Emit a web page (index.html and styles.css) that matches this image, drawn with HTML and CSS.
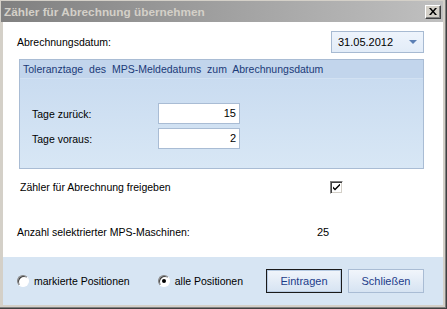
FILE: index.html
```html
<!DOCTYPE html>
<html lang="de">

<head>
    <meta charset="UTF-8">
    <title>Zähler für Abrechnung übernehmen</title>
    <link rel="stylesheet" href="styles.css">
</head>

<body>

    <div class="window">
        <div class="titlebar">
            <span class="title">Zähler für Abrechnung übernehmen</span>
            <span class="close-btn">
                <svg width="8" height="7" viewBox="0 0 8 7">
                    <path d="M0 0h2l2 2.5L6 0h2L5 3.5 8 7H6L4 4.5 2 7H0l3-3.5z" fill="#000"/>
                </svg>
            </span>
        </div>

        <div class="client">
            <div class="content">
                <div class="date-row">
                    <span class="label">Abrechnungsdatum:</span>
                    <div class="combo">
                        <span>31.05.2012</span>
                        <span class="combo-arrow"></span>
                    </div>
                </div>

                <div class="group">
                    <div class="group-head">Toleranztage des MPS-Meldedatums zum Abrechnungsdatum</div>
                    <div class="group-body">
                        <div class="field">
                            <span class="field-label">Tage zurück:</span>
                            <div class="num-input">15</div>
                        </div>
                        <div class="field">
                            <span class="field-label">Tage voraus:</span>
                            <div class="num-input">2</div>
                        </div>
                    </div>
                </div>

                <div class="check-row">
                    <span class="check-label">Zähler für Abrechnung freigeben</span>
                    <span class="checkbox">
                        <svg width="7" height="7" viewBox="0 0 7 7">
                            <path d="M0 2.5v2l2 2 5-5v-2l-5 5z" fill="#000"/>
                        </svg>
                    </span>
                </div>

                <div class="count-row">
                    <span class="count-label">Anzahl selektrierter MPS-Maschinen:</span>
                    <span class="count-value">25</span>
                </div>
            </div>

            <div class="footer">
                <div class="radio-group">
                    <label class="radio-item"><span class="radio"></span>markierte Positionen</label>
                    <label class="radio-item second"><span class="radio checked"></span>alle Positionen</label>
                </div>
                <div class="button-group">
                    <span class="btn default">Eintragen</span>
                    <span class="btn">Schließen</span>
                </div>
            </div>
        </div>
    </div>

</body>

</html>
```

FILE: styles.css
```css
/* Page */
body {
    margin: 0;
    font-family: 'Liberation Sans', Arial, sans-serif;
    font-size: 10.5px;
    color: #000;
    background: #d4d0c8;
}

/* Classic window frame */
.window {
    width: 447px;
    height: 309px;
    box-sizing: border-box;
    padding: 1px 0 0 1px;
    background: #d4d0c8;
    border-right: 1px solid #404040;
    border-bottom: 1px solid #404040;
    box-shadow: inset -1px -1px 0 #808080;
    display: flex;
    flex-direction: column;
}

.titlebar {
    height: 21px;
    margin-right: 3px;
    background: linear-gradient(90deg, #808080, #c0c0c0);
    display: flex;
    align-items: center;
    justify-content: space-between;
    padding: 0 2px 0 3px;
}

.title {
    font-weight: bold;
    font-size: 11.8px;
    color: #d4d0c8;
}

.close-btn {
    width: 16px;
    height: 14px;
    box-sizing: border-box;
    background: #d4d0c8;
    border: 1px solid;
    border-color: #fff #404040 #404040 #fff;
    box-shadow: inset -1px -1px 0 #808080;
    display: flex;
    align-items: center;
    justify-content: center;
}

.client {
    flex: 1;
    margin: 0 3px 3px 2px;
    background: #fff;
    display: flex;
    flex-direction: column;
}

.content {
    flex: 1;
    padding: 9px 19px 0 14px;
}

/* Date row */
.date-row {
    height: 22px;
    display: flex;
    align-items: center;
    justify-content: space-between;
}

.combo {
    width: 93px;
    height: 22px;
    box-sizing: border-box;
    border: 1px solid #a7bad2;
    background: linear-gradient(#eef4fc, #e2ecf8);
    display: flex;
    align-items: center;
    justify-content: space-between;
    padding: 0 6px 0 6px;
    font-size: 11px;
}

.combo-arrow {
    width: 0;
    height: 0;
    border-left: 4px solid transparent;
    border-right: 4px solid transparent;
    border-top: 4px solid #5b7fb4;
}

/* Group box */
.group {
    margin: 6px 0 0 2px;
    height: 110px;
    box-sizing: border-box;
    border: 1px solid #a9bcd4;
    background: linear-gradient(#c6d9ef, #d8e7f5);
}

.group-head {
    height: 18px;
    line-height: 18px;
    padding-left: 3px;
    background: #c2d5ec;
    border-bottom: 1px solid #d2e1f2;
    color: #1b3a78;
    word-spacing: 3px;
}

.group-body {
    padding: 24px 0 0 12px;
}

.field {
    display: flex;
    align-items: center;
    height: 21px;
    margin-bottom: 4px;
}

.field-label {
    width: 126px;
}

.num-input {
    width: 82px;
    height: 21px;
    box-sizing: border-box;
    border: 1px solid #a9bcd4;
    background: #fff;
    text-align: right;
    line-height: 19px;
    padding-right: 3px;
    font-size: 11px;
}

/* Checkbox row */
.check-row {
    margin-top: 11px;
    height: 14px;
    display: flex;
    align-items: center;
    padding-left: 3px;
}

.check-label {
    width: 310px;
}

.checkbox {
    width: 13px;
    height: 13px;
    box-sizing: border-box;
    border: 1px solid;
    border-color: #808080 #fff #fff #808080;
    box-shadow: inset 1px 1px 0 #404040, inset -1px -1px 0 #d4d0c8;
    background: #fff;
    display: flex;
    align-items: center;
    justify-content: center;
}

.count-row {
    margin-top: 31px;
    height: 14px;
    display: flex;
    align-items: center;
}

.count-label {
    width: 300px;
}

.count-value {
    font-size: 11px;
}

/* Footer */
.footer {
    height: 48px;
    background: #d7e5f3;
    display: flex;
    align-items: center;
    justify-content: space-between;
    padding: 0 19px 0 14px;
}

.radio-group {
    display: flex;
    align-items: center;
}

.radio-item {
    display: flex;
    align-items: center;
    gap: 5px;
}

.radio-item.second {
    margin-left: 28px;
}

.radio {
    width: 12px;
    height: 12px;
    box-sizing: border-box;
    border-radius: 50%;
    border: 1px solid;
    border-color: #808080 #fff #fff #808080;
    box-shadow: inset 1px 1px 0 #404040;
    background: #fff;
    position: relative;
}

.radio.checked::after {
    content: "";
    position: absolute;
    left: 3px;
    top: 3px;
    width: 4px;
    height: 4px;
    border-radius: 50%;
    background: #000;
}

.button-group {
    display: flex;
    gap: 6px;
}

.btn {
    width: 76px;
    height: 24px;
    box-sizing: border-box;
    border: 1px solid #a9bcd4;
    background: linear-gradient(#f1f5fb, #d6e3f2);
    color: #1d3c8a;
    display: flex;
    align-items: center;
    justify-content: center;
    font-size: 11px;
}

.btn.default {
    border-color: #1a1a1a;
    box-shadow: inset 0 0 0 1px #b8cbe2;
}
```
